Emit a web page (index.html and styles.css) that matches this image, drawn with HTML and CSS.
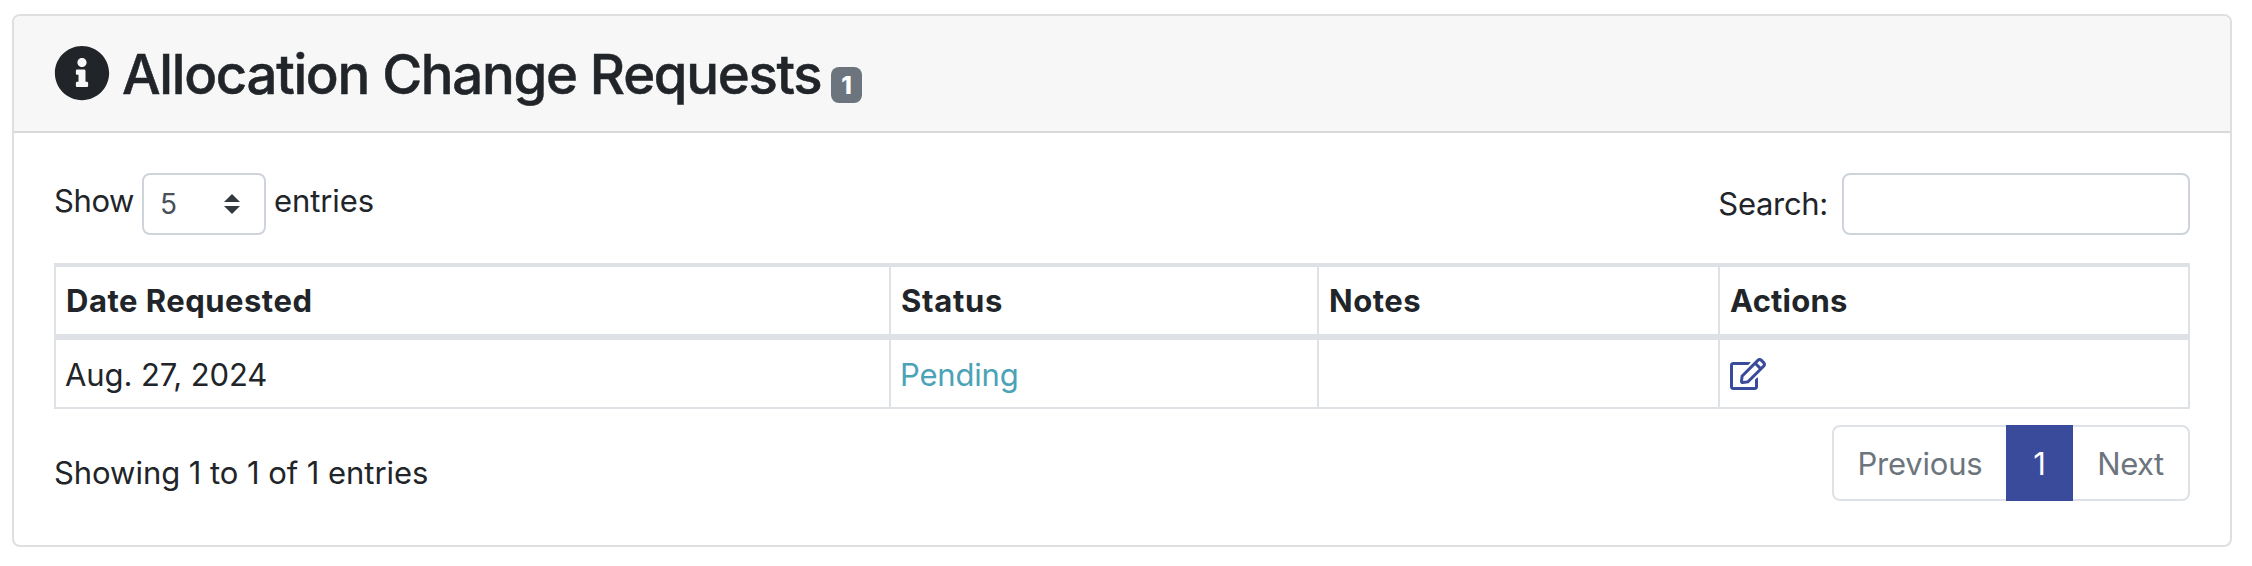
FILE: index.html
```html
<!DOCTYPE html>
<html lang="en">
<head>
<meta charset="utf-8">
<title>Allocation Change Requests</title>
<link rel="stylesheet" href="styles.css">
</head>
<body>
<section class="card">
  <header class="card-header">
    <svg class="icon-info" viewBox="0 0 512 512" aria-hidden="true"><path fill="currentColor" d="M256 8C119.043 8 8 119.083 8 256c0 136.997 111.043 248 248 248s248-111.003 248-248C504 119.083 392.957 8 256 8zm0 110c23.196 0 42 18.804 42 42s-18.804 42-42 42-42-18.804-42-42 18.804-42 42-42zm56 254c0 6.627-5.373 12-12 12h-88c-6.627 0-12-5.373-12-12v-24c0-6.627 5.373-12 12-12h12v-64h-12c-6.627 0-12-5.373-12-12v-24c0-6.627 5.373-12 12-12h64c6.627 0 12 5.373 12 12v100h12c6.627 0 12 5.373 12 12v24z"/></svg>
    <h3 class="title">Allocation Change Requests</h3>
    <span class="badge">1</span>
  </header>
  <div class="card-body">
    <div class="controls">
      <div class="length">
        <span class="length-text show">Show</span>
        <div class="select"><span>5</span>
          <svg class="caret" viewBox="0 0 4 5" aria-hidden="true"><path fill="#343a40" d="M2 0L0 2h4zm0 5L0 3h4z"/></svg>
        </div>
        <span class="length-text entries">entries</span>
      </div>
      <label class="search"><span>Search:</span><input type="text" class="search-input"></label>
    </div>
    <table class="table">
      <colgroup><col class="col-date"><col class="col-status"><col class="col-notes"><col class="col-actions"></colgroup>
      <thead><tr><th class="h-date">Date Requested</th><th class="h-status">Status</th><th class="h-notes">Notes</th><th class="h-actions">Actions</th></tr></thead>
      <tbody><tr><td class="date">Aug. 27, 2024</td><td class="pending">Pending</td><td></td><td class="actions">
        <svg class="icon-edit" viewBox="0 0 576 512" aria-label="Edit"><path fill="currentColor" d="M402.3 344.9l32-32c5-5 13.7-1.5 13.7 5.7V464c0 26.500-21.500 48-48 48H48c-26.500 0-48-21.500-48-48V112c0-26.500 21.500-48 48-48h273.500c7.100 0 10.700 8.600 5.700 13.700l-32 32c-1.500 1.500-3.500 2.300-5.700 2.300H48v352h352V350.500c0-2.100.8-4.100 2.300-5.600zm156.600-201.800L296.300 405.700l-90.400 10c-26.200 2.900-48.500-19.200-45.600-45.600l10-90.400L432.900 17.100c22.900-22.900 59.900-22.900 82.700 0l43.200 43.200c22.900 22.900 22.900 60 .1 82.800zM460.100 174L402 115.900 216.200 301.800l-7.300 65.300 65.300-7.300L460.100 174zm64.800-79.700l-43.200-43.200c-4.100-4.100-10.800-4.100-14.800 0L436 82l58.100 58.100 30.900-30.900c4-4.200 4-10.800-.1-14.900z"/></svg>
      </td></tr></tbody>
    </table>
    <div class="footer">
      <div class="info">Showing 1 to 1 of 1 entries</div>
      <nav class="pagination"><span class="page previous">Previous</span><span class="page active">1</span><span class="page next">Next</span></nav>
    </div>
  </div>
</section>
</body>
</html>
```
FILE: styles.css
```css
* { box-sizing: border-box; }
body {
  margin: 0;
  padding: 14px 20px 0 12px;
  background: #fff;
  color: #212529;
  font-family: Inter, "Liberation Sans", sans-serif;
  font-size: 31px;
  line-height: 48px;
}
.card {
  height: 533px;
  border: 2px solid #dfdfdf;
  border-radius: 8px;
  overflow: hidden;
}
.card-header {
  display: flex;
  height: 117px;
  padding: 29px 40px 0;
  background: #f7f7f7;
  border-bottom: 2px solid #d9d9d9;
}
.icon-info { width: 56px; height: 56px; }
.title {
  width: 699px;
  margin: 0 0 0 12px;
  font-size: 54.500px;
  font-weight: 500;
  line-height: 58px;
  letter-spacing: -1.300px;
  white-space: nowrap;
  -webkit-text-stroke: .5px currentColor;
}
.badge {
  width: 31px;
  height: 36px;
  margin: 22px 0 0 10px;
  border-radius: 8px;
  background: #6c757d;
  color: #fff;
  font-size: 24px;
  font-weight: 800;
  line-height: 37px;
  text-align: center;
}
.card-body { padding: 40px 40px 0; }
.controls { display: flex; justify-content: space-between; height: 90px; }
.length { display: flex; }
.length-text { margin-top: 4px; }
.show { width: 79px; letter-spacing: -.4px; }
.entries { margin-left: -1px; letter-spacing: -.1px; }
.select {
  display: flex;
  justify-content: space-between;
  align-items: center;
  width: 124px;
  height: 62px;
  margin: 0 9px;
  padding: 0 24px 0 16px;
  border: 2px solid #ced4da;
  border-radius: 8px;
  color: #495057;
  font-size: 28px;
}
.caret { width: 16px; height: 20px; }
.search { display: flex; line-height: 62px; letter-spacing: -.3px; }
.search-input {
  width: 348px;
  height: 62px;
  margin: 0 0 0 14px;
  border: 2px solid #ced4da;
  border-radius: 8px;
  background: #fff;
}
.table {
  width: 2136px;
  table-layout: fixed;
  border-collapse: separate;
  border-spacing: 0;
  border-left: 2px solid #dee2e6;
  border-top: 4px solid #dee2e6;
}
.col-date { width: 835px; }
.col-status { width: 428px; }
.col-notes { width: 401px; }
th, td {
  height: 69px;
  padding: 2px 0 0 9px;
  border-right: 2px solid #dee2e6;
  border-bottom: 2px solid #dee2e6;
  text-align: left;
  vertical-align: middle;
}
th { height: 73px; padding: 0 0 0 10px; border-bottom-width: 6px; font-weight: 700; }
.h-date { letter-spacing: .5px; }
.h-status { letter-spacing: .7px; }
.h-notes { letter-spacing: .5px; }
.h-actions { letter-spacing: .2px; }
.date { letter-spacing: -.1px; }
.pending { color: #4ba3b7; letter-spacing: -.2px; }
.actions { padding-top: 0; padding-left: 10px; }
.icon-edit { display: block; width: 36px; height: 32px; color: #3b4b9b; }
.footer { display: flex; justify-content: space-between; }
.info { margin-top: 40px; letter-spacing: -.05px; }
.pagination {
  display: flex;
  width: 358px;
  height: 76px;
  margin-top: 16px;
  border-radius: 8px;
  color: #6c757d;
}
.page {
  border: 2px solid #dee2e6;
  line-height: 74px;
  text-align: center;
}
.previous { width: 174px; border-right: 0; border-radius: 8px 0 0 8px; letter-spacing: -.2px; }
.active { width: 67px; border-color: #3b4b9b; background: #3b4b9b; color: #fff; }
.next { width: 117px; border-left: 0; border-radius: 0 8px 8px 0; letter-spacing: -.5px; }
```
